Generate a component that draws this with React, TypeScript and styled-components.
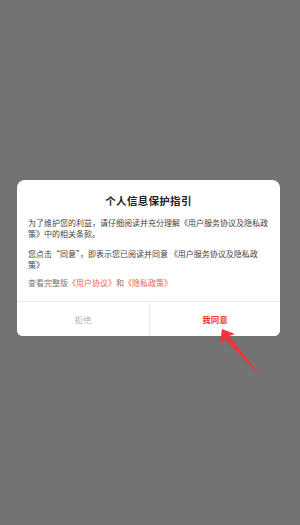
import styled, { createGlobalStyle } from "styled-components";

const GlobalStyle = createGlobalStyle`
  html, body {
    margin: 0;
    padding: 0;
    background: #737373;
  }
  body {
    font-family: "Noto Sans CJK SC", "Noto Sans", sans-serif;
  }
`;

const Screen = styled.div`
  position: relative;
  width: 300px;
  height: 525px;
  background: #737373;
  padding-top: 180px;
  box-sizing: border-box;
  overflow: hidden;
`;

const Dialog = styled.div`
  margin-left: 17px;
  width: 263px;
  background: #fff;
  border-radius: 8px 8px 6px 6px;
  overflow: hidden;
`;

const Body = styled.div`
  padding: 13px 11px 13px 11px;
`;

const Title = styled.h2`
  margin: 0 0 8px;
  text-align: center;
  font-size: 10.5px;
  line-height: 16px;
  font-weight: 700;
  color: #222;
  letter-spacing: 0.3px;
`;

const Para = styled.p<{ $gap?: number; $muted?: boolean }>`
  margin: 0 0 ${({ $gap = 9 }) => $gap}px;
  font-size: 8px;
  line-height: 11px;
  color: ${({ $muted }) => ($muted ? "#777" : "#444")};

  &:last-child {
    margin-bottom: 0;
  }
`;

const Link = styled.span`
  color: #f2604f;
`;

const Actions = styled.div`
  display: grid;
  grid-template-columns: 132px 1fr;
  border-top: 1px solid #ececec;
  height: 34px;
`;

const Action = styled.button<{ $primary?: boolean }>`
  border: none;
  background: #fff;
  padding: 0;
  margin: 0;
  font-family: inherit;
  font-size: 8.5px;
  font-weight: ${({ $primary }) => ($primary ? 700 : 400)};
  color: ${({ $primary }) => ($primary ? "#f2392c" : "#b5b5b5")};
  & + & {
    border-left: 1px solid #ececec;
  }
`;

const Pointer = styled.svg`
  position: absolute;
  left: 0;
  top: 0;
  pointer-events: none;
`;

export default function App() {
  return (
    <>
      <GlobalStyle />
      <Screen>
        <Dialog>
          <Body>
            <Title>个人信息保护指引</Title>
            <Para>
              为了维护您的利益，请仔细阅读并充分理解《用户服务协议及隐私政策》中的相关条款。
            </Para>
            <Para $gap={7}>
              您点击“同意”，即表示您已阅读并同意 《用户服务协议及隐私政策》
            </Para>
            <Para $muted>
              查看完整版<Link>《用户协议》</Link>和<Link>《隐私政策》</Link>
            </Para>
          </Body>
          <Actions>
            <Action>拒绝</Action>
            <Action $primary>我同意</Action>
          </Actions>
        </Dialog>
        <Pointer width="300" height="525" viewBox="0 0 300 525">
          <polygon
            points="222,329 220,343 225,339.5 262,377 229,336 235,334"
            fill="#f5333f"
          />
        </Pointer>
      </Screen>
    </>
  );
}
